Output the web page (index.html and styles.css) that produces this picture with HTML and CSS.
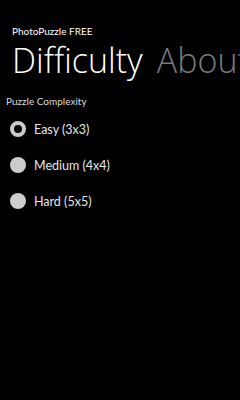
FILE: index.html
```html
<!DOCTYPE html>
<html lang="en">
<head>
    <meta charset="UTF-8">
    <meta name="viewport" content="width=device-width, initial-scale=1.0">
    <title>PhotoPuzzle FREE</title>
    <link rel="stylesheet" href="styles.css">
</head>
<body>
    <header class="app-header">
        <div class="app-title">PhotoPuzzle FREE</div>
        <div class="pivot">
            <span class="pivot-item active">Difficulty</span>
            <span class="pivot-item">About</span>
        </div>
    </header>

    <section class="settings">
        <div class="group-label">Puzzle Complexity</div>
        <ul class="radio-list">
            <li class="radio-item checked">
                <span class="radio"></span>
                <span class="radio-label">Easy (3x3)</span>
            </li>
            <li class="radio-item">
                <span class="radio"></span>
                <span class="radio-label">Medium (4x4)</span>
            </li>
            <li class="radio-item">
                <span class="radio"></span>
                <span class="radio-label">Hard (5x5)</span>
            </li>
        </ul>
    </section>
</body>
</html>
```

FILE: styles.css
```css
html, body {
    background: #000;
}
body {
    margin: 0;
    width: 240px;
    height: 400px;
    overflow: hidden;
    color: #fff;
    font-family: 'Lato', 'Liberation Sans', sans-serif;
}
.app-header {
    padding: 24px 0 0 12px;
}
.app-title {
    font-size: 10px;
    line-height: 15px;
    color: #fff;
}
.pivot {
    white-space: nowrap;
    margin-top: 0;
    font-family: 'Open Sans', sans-serif;
}
.pivot-item {
    font-size: 34px;
    font-weight: 300;
    line-height: 42px;
    color: #7a7a7a;
    margin-right: 10px;
}
.pivot-item.active {
    color: #fff;
}
.settings {
    padding: 13px 0 0 6px;
}
.group-label {
    font-size: 10px;
    line-height: 15px;
    color: #ddd;
}
.radio-list {
    list-style: none;
    margin: 2px 0 0;
    padding: 0;
}
.radio-item {
    display: flex;
    align-items: center;
    height: 36px;
}
.radio {
    width: 16px;
    height: 16px;
    border-radius: 50%;
    background: #ccc;
    margin: 0 8px 0 4px;
    box-sizing: border-box;
}
.radio-item.checked .radio {
    background: #000;
    border: 4px solid #ccc;
}
.radio-label {
    font-size: 12.5px;
    color: #e6e6e6;
}
```
